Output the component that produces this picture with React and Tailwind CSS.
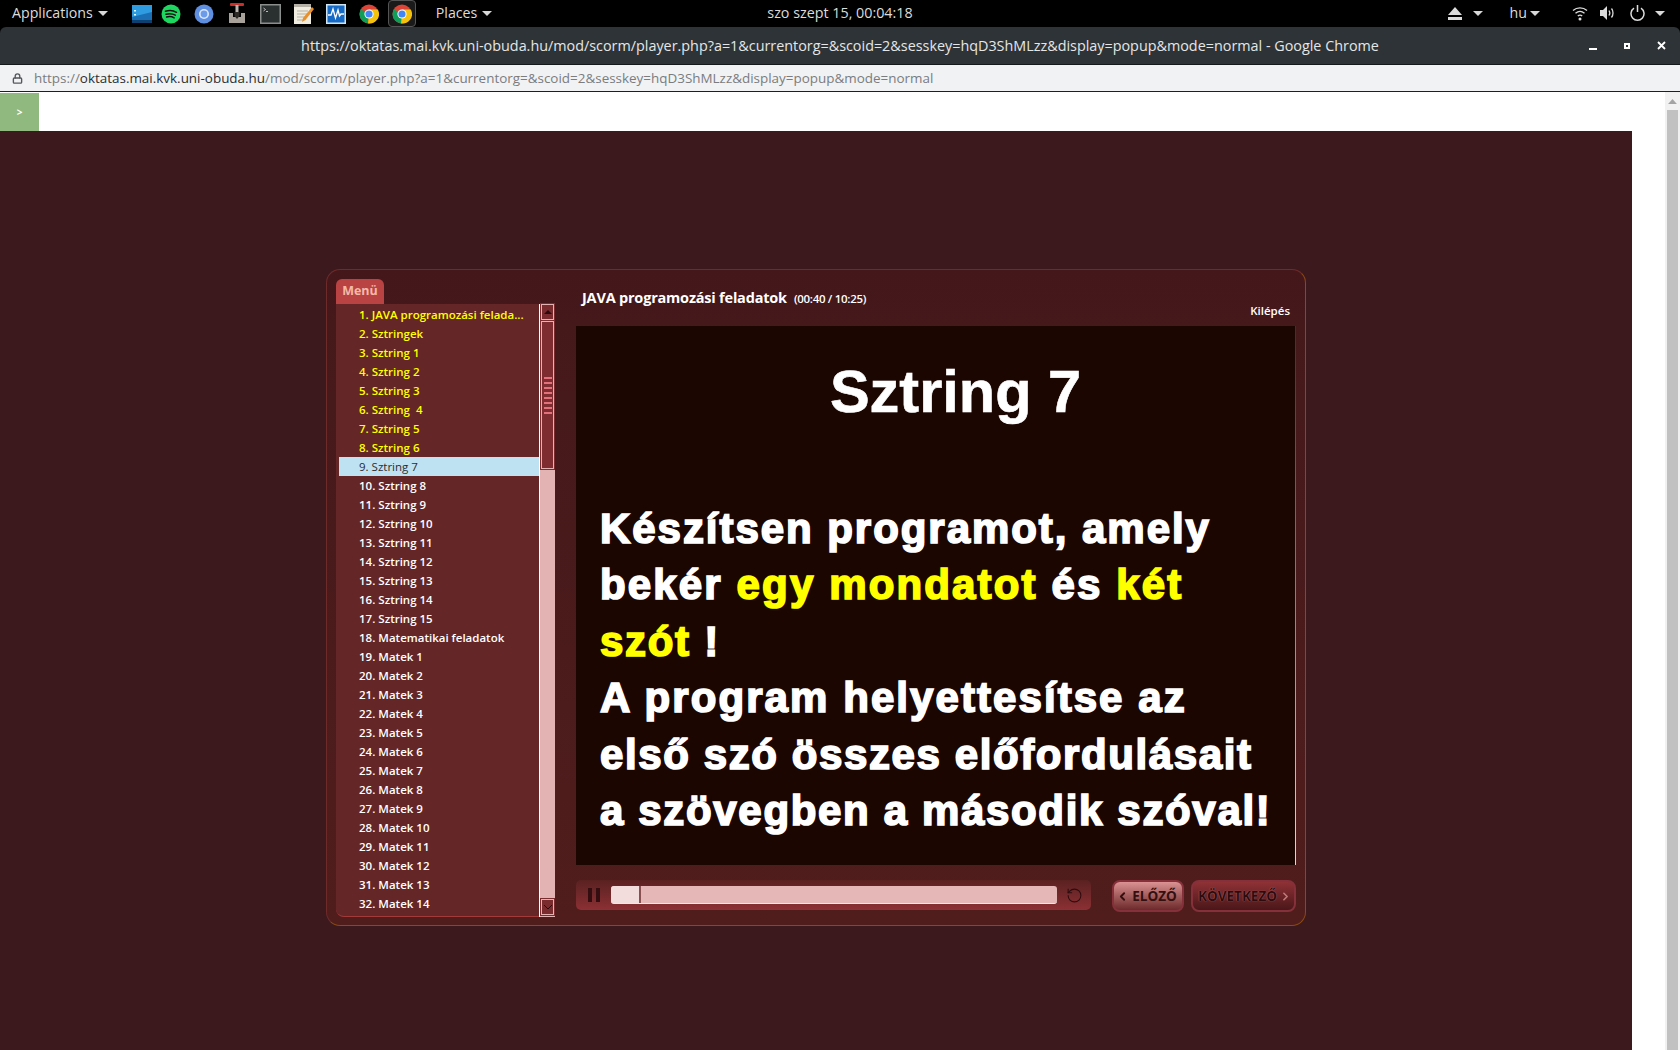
import { Lock, RotateCcw, ChevronLeft, ChevronRight } from "lucide-react";

const menuItems = [
  "JAVA programozási felada...", "Sztringek", "Sztring 1", "Sztring 2", "Sztring 3", "Sztring  4",
  "Sztring 5", "Sztring 6", "Sztring 7", "Sztring 8", "Sztring 9", "Sztring 10", "Sztring 11",
  "Sztring 12", "Sztring 13", "Sztring 14", "Sztring 15", "Matematikai feladatok", "Matek 1",
  "Matek 2", "Matek 3", "Matek 4", "Matek 5", "Matek 6", "Matek 7", "Matek 8", "Matek 9",
  "Matek 10", "Matek 11", "Matek 12", "Matek 13", "Matek 14",
];

const url = "https://oktatas.mai.kvk.uni-obuda.hu/mod/scorm/player.php?a=1&currentorg=&scoid=2&sesskey=hqD3ShMLzz&display=popup&mode=normal";

function Caret({ className = "" }) {
  return (
    <svg width="10" height="5" viewBox="0 0 10 5" className={className}>
      <path d="M0 0h10L5 5z" fill="#d8d8d8" />
    </svg>
  );
}

function ChromeIcon() {
  return (
    <svg width="20" height="20" viewBox="0 0 20 20">
      <circle cx="10" cy="10" r="9.5" fill="#db4437" />
      <path d="M10 10 1.8 5.2A9.5 9.5 0 0 0 9 19.45z" fill="#0f9d58" />
      <path d="M10 5.5h8.8A9.5 9.5 0 0 1 9 19.45L10 10z" fill="#f4c20d" />
      <circle cx="10" cy="10" r="4.6" fill="#fff" />
      <circle cx="10" cy="10" r="3.6" fill="#4285f4" />
    </svg>
  );
}

function DockIcons() {
  return (
    <div className="ml-[24px] flex items-center">
      <svg width="20" height="18" viewBox="0 0 20 18">
        <rect width="20" height="18" rx="1" fill="#1b6fb5" />
        <path d="M0 0h20v7L0 12z" fill="#2f9be0" />
        <rect y="15" width="20" height="3" fill="#0d3f70" />
        <path d="M2 5h2v1.500H2zm0 4h2v1.500H2z" fill="#dff" />
      </svg>
      <svg width="20" height="20" viewBox="0 0 20 20" className="ml-[9px]">
        <circle cx="10" cy="10" r="9.500" fill="#1ed760" />
        <path d="M4.500 7.300c3.800-1.100 7.800-.8 11 1M5 10.200c3.200-.9 6.500-.6 9.300.9M5.600 13c2.600-.7 5.300-.5 7.600.8" stroke="#111" strokeWidth="1.500" fill="none" strokeLinecap="round" />
      </svg>
      <svg width="20" height="20" viewBox="0 0 20 20" className="ml-[13px]">
        <circle cx="10" cy="10" r="9.500" fill="#5f8fe0" />
        <circle cx="10" cy="10" r="5" fill="#dbe7fb" />
        <circle cx="10" cy="10" r="3.400" fill="#6c9bea" />
      </svg>
      <svg width="18" height="21" viewBox="0 0 18 21" className="ml-[14px]">
        <rect x="2" y="0" width="14" height="3" rx="1" fill="#c9302c" />
        <rect x="7.500" y="2" width="3" height="9" fill="#b9b4ad" />
        <path d="M1 10h4v4h8v-4h4v10H1z" fill="#a8a29a" />
        <path d="M6.500 9h5v4L9 16l-2.500-3z" fill="#2e2a26" />
      </svg>
      <svg width="21" height="20" viewBox="0 0 21 20" className="ml-[14px]">
        <rect width="21" height="20" fill="#8a8f8d" />
        <rect x="1.500" y="1.500" width="18" height="17" fill="#2a2f30" />
        <path d="M3.500 4l2 1.500-2 1.500" stroke="#ddd" strokeWidth=".8" fill="none" />
        <rect x="6" y="7" width="2" height=".8" fill="#ddd" />
      </svg>
      <svg width="21" height="21" viewBox="0 0 21 21" className="ml-[12px]">
        <rect x="1" y="1" width="17" height="20" fill="#f0ece0" />
        <rect x="1" y="1" width="17" height="3" fill="#b5b1a6" />
        <path d="M4 8h11M4 11h11M4 14h8M4 17h7" stroke="#b5b1a6" />
        <path d="M19 4 10 15l-1 4 3.500-2L21 6z" fill="#e8912c" />
      </svg>
      <svg width="20" height="20" viewBox="0 0 20 20" className="ml-[12px]">
        <rect width="20" height="20" fill="#cfe6f7" />
        <rect x="1.500" y="1.500" width="17" height="17" fill="#1669c4" />
        <path d="M2 11h3l2-6 2.500 9L12 6l1.500 6 1.500-2h3" stroke="#fff" strokeWidth="1.300" fill="none" />
      </svg>
      <div className="ml-[13px]">
        <ChromeIcon />
      </div>
      <div className="ml-[9px] flex h-[27px] w-[28px] items-center justify-center rounded-[4px] border border-[#555] bg-[#1a1a1a]">
        <ChromeIcon />
      </div>
    </div>
  );
}

function TopBar() {
  return (
    <div className="grid h-[27px] grid-cols-[1fr_auto_1fr] items-center bg-black text-[14.200px] text-[#dcdcdc]">
      <div className="flex items-center pl-[12px]">
        <span className="pb-[2px]">Applications</span>
        <Caret className="ml-[5px]" />
        <DockIcons />
        <span className="ml-[20px] pb-[2px]">Places</span>
        <Caret className="ml-[5px]" />
      </div>
      <div className="pb-[2px] text-[14.300px]">szo szept 15, 00:04:18</div>
      <div className="flex items-center justify-end pr-[15px]">
        <svg width="14" height="13" viewBox="0 0 14 13">
          <path d="M7 0l7 8H0zM0 10h14v3H0z" fill="#dcdcdc" />
        </svg>
        <Caret className="ml-[11px]" />
        <span className="ml-[27px] pb-[2px]">hu</span>
        <Caret className="ml-[3px]" />
        <svg width="16" height="15" viewBox="0 0 16 15" fill="none" stroke="#dcdcdc" strokeWidth="1.400" className="ml-[32px]">
          <path d="M1 4.500c4-3.500 10-3.500 14 0M3.500 7.300c2.700-2.300 6.300-2.300 9 0M5.800 10c1.300-1 3.100-1 4.400 0" />
          <circle cx="8" cy="13" r="1.500" fill="#dcdcdc" stroke="none" />
        </svg>
        <svg width="15" height="14" viewBox="0 0 15 14" className="ml-[12px]">
          <path d="M0 4h3l4-4v14l-4-4H0z" fill="#dcdcdc" />
          <path d="M9 4.500c1 1.500 1 3.500 0 5M11.500 2.500c2 2.500 2 6.500 0 9" stroke="#dcdcdc" strokeWidth="1.300" fill="none" />
        </svg>
        <svg width="15" height="16" viewBox="0 0 15 16" fill="none" stroke="#dcdcdc" strokeWidth="1.500" className="ml-[15px]">
          <path d="M7.500 0v7M4 3.200a6.500 6.500 0 1 0 7 0" />
        </svg>
        <Caret className="ml-[10px]" />
      </div>
    </div>
  );
}

function TitleBar() {
  return (
    <div className="grid h-[38px] grid-cols-[1fr_auto_1fr] items-center rounded-t-[6px] border-b border-[#15191a] bg-[#2d3336] text-[14.370px] text-[#e6e6e6]">
      <div />
      <div>{url} - Google Chrome</div>
      <div className="flex items-center justify-end pr-[14px]">
        <div className="h-[2px] w-[8px] translate-y-[3px] bg-white" />
        <div className="ml-[27px] flex h-[6px] w-[6px] items-center justify-center border-[2px] border-white" />
        <svg width="9" height="9" viewBox="0 0 9 9" className="ml-[27px]">
          <path d="M1 1l7 7M8 1L1 8" stroke="#fff" strokeWidth="1.800" />
        </svg>
      </div>
    </div>
  );
}

function AddressBar() {
  return (
    <div className="flex h-[27px] items-center border-b border-[#1d1f20] bg-[#f1f2f4] pl-[12px] text-[13.450px] text-[#7a7c80]">
      <Lock size={11} strokeWidth={3} className="text-[#55585c]" />
      <span className="ml-[11px]">https://</span>
      <span className="text-[#2c2e30]">oktatas.mai.kvk.uni-obuda.hu</span>
      <span>/mod/scorm/player.php?a=1&amp;currentorg=&amp;scoid=2&amp;sesskey=hqD3ShMLzz&amp;display=popup&amp;mode=normal</span>
    </div>
  );
}

function MenuList() {
  return (
    <div className="flex h-[613px] w-[219px]">
      <div className="w-[204px] rounded-bl-[8px] border-b border-[#a33a3a] bg-[#642626] pl-[3px] pt-[1px]">
        {menuItems.map((item, i) => {
          const active = i === 8;
          const seen = i < 8;
          return (
            <div
              key={i}
              className={`flex h-[19px] w-[200px] items-center whitespace-pre pl-[20px] text-[11.500px] ${
                active
                  ? "bg-[#bfe2f3] font-normal text-[#2d2d2d]"
                  : seen
                    ? "font-semibold text-[#ffff00]"
                    : "font-semibold text-white"
              }`}
            >
              <span className="mr-[3px]">{i + 1}.</span> {item}
            </div>
          );
        })}
      </div>
      <div className="flex w-[16px] flex-col border-l border-white bg-[#e3b3b3] px-[1px] pb-[2px]">
        <div className="flex h-[16px] items-center justify-center border-[1.500px] border-[#e3b3b3] bg-[#7a2b2e] outline-1 outline-[#7a2b2e]">
          <svg width="8" height="4" viewBox="0 0 8 4"><path d="M0 4l4-4 4 4z" fill="#2c0a0c" /></svg>
        </div>
        <div className="mt-[1px] flex h-[148px] flex-col items-center justify-center gap-[3px] border-[1.500px] border-[#e3b3b3] bg-[#7f2c30] outline-1 outline-[#7a2b2e]">
          {[0, 1, 2, 3, 4, 5, 6, 7].map((n) => (
            <div key={n} className="h-[2px] w-[8px] bg-[#e3707a]" />
          ))}
        </div>
        <div className="flex-1" />
        <div className="flex h-[16px] items-center justify-center border-[1.500px] border-[#e3b3b3] bg-[#7a2b2e] outline-1 outline-[#7a2b2e]">
          <svg width="8" height="5" viewBox="0 0 8 5"><path d="M0 0l4 4 4-4" fill="none" stroke="#2c0a0c" /></svg>
        </div>
      </div>
    </div>
  );
}

function Slide() {
  const line = "h-[56.400px]";
  return (
    <div className="flex h-[539px] w-[720px] bg-[#1c0602] font-['Liberation_Sans',sans-serif] font-bold text-white">
      <div className="flex-1 pl-[24px]">
        <div className="ml-[-24px] pl-[40px] pt-[31px] text-center text-[59.500px] leading-[70px] [-webkit-text-stroke:0.600px_currentColor]">
          Sztring 7
        </div>
        <div className="mt-[74px] text-[42px] leading-[56.400px] tracking-[1.700px] [-webkit-text-stroke:1.700px_currentColor]">
          <div className={`${line} tracking-[1.950px]`}>Készítsen programot, amely</div>
          <div className={`${line} tracking-[2.140px]`}>
            bekér <span className="text-[#ffff00]">egy mondatot</span> és <span className="text-[#ffff00]">két</span>
          </div>
          <div className={line}>
            <span className="text-[#ffff00]">szót</span> !
          </div>
          <div className={`${line} tracking-[2.070px]`}>A program helyettesítse az</div>
          <div className={`${line} tracking-[1.600px]`}>első szó összes előfordulásait</div>
          <div className={`${line} tracking-[1.660px]`}>a szövegben a második szóval!</div>
        </div>
      </div>
      <div className="w-px bg-linear-to-b from-[#4a2a25] to-[#dcd8d6]" />
    </div>
  );
}

function Controls() {
  return (
    <div className="mt-[15px] flex h-[31px] items-start">
      <div className="flex h-[30px] w-[515px] items-center rounded-[5px] bg-linear-to-b from-[#5a2121] to-[#8c3034] pl-[12px]">
        <div className="flex gap-[4px]">
          <div className="h-[14px] w-[4px] bg-[#330d0f]" />
          <div className="h-[14px] w-[4px] bg-[#330d0f]" />
        </div>
        <div className="ml-[11px] flex h-[18px] w-[446px] overflow-hidden rounded-[3px] border-b border-[#f5e5e5] bg-[#e5b7b7]">
          <div className="h-full w-[30px] border-r-2 border-[#8a5050] bg-[#f3dcdc]" />
        </div>
        <RotateCcw size={17} strokeWidth={1.500} className="ml-[9px] text-[#2e0c0e]" />
      </div>
      <button className="ml-[21px] flex h-[32px] w-[72px] items-center justify-center rounded-[8px] border-2 border-[#85303a] bg-linear-to-b from-[#dc9292] to-[#6d2a2c] pr-[3px] text-[13.500px] font-bold text-[#33100f]">
        <ChevronLeft size={13} strokeWidth={3.500} />
        <span className="ml-[3px]">ELŐZŐ</span>
      </button>
      <button className="ml-[7px] flex h-[32px] w-[105px] items-center justify-center rounded-[8px] border-2 border-[#85303a] bg-linear-to-b from-[#8f3236] to-[#4a1719] pl-[3px] text-[13.500px] font-bold text-[#2c0c0e]">
        <span className="[text-shadow:0_0_1px_#c98080]">KÖVETKEZŐ</span>
        <ChevronRight size={13} strokeWidth={3} className="ml-[2px] text-[#c07a7a]" />
      </button>
    </div>
  );
}

function Player() {
  return (
    <div className="ml-[326px] mt-[137px] flex h-[657px] w-[980px] rounded-[14px] border border-[#6f2a2a] border-b-[#8a4a14] border-r-[#8a4a14] bg-linear-to-b from-[#44181a] to-[#501d1c] pl-[9px] pt-[9px]">
      <div className="flex flex-col">
        <div className="flex h-[25px] w-[48px] items-center justify-center rounded-t-[6px] bg-[#b94343] text-[12.500px] font-bold text-[#f3b9a8]">
          Menü
        </div>
        <MenuList />
      </div>
      <div className="ml-[21px] flex flex-col">
        <div className="relative h-[47px] w-[720px]">
          <div className="flex items-baseline pl-[6px] pt-[8px] text-white">
            <span className="text-[14.500px] font-bold tracking-[-0.200px]">JAVA programozási feladatok</span>
            <span className="ml-[7px] text-[11.500px] font-semibold tracking-[-0.300px]">(00:40 / 10:25)</span>
          </div>
          <div className="absolute right-[6px] top-[23px] text-[11.500px] font-semibold text-white">Kilépés</div>
        </div>
        <Slide />
        <Controls />
      </div>
    </div>
  );
}

export default function App() {
  return (
    <div className="flex h-screen w-full flex-col overflow-hidden bg-black font-['Open_Sans',sans-serif]">
      <TopBar />
      <TitleBar />
      <AddressBar />
      <div className="flex flex-1 bg-white">
        <div className="flex flex-1 flex-col pt-[1px]">
          <div className="h-[38px]">
            <div className="flex h-full w-[39px] items-center justify-center bg-[#8fb97e] text-[10px] font-bold text-white">
              &gt;
            </div>
          </div>
          <div className="w-[1632px] flex-1 bg-[#3b191d] pt-px">
            <Player />
          </div>
        </div>
        <div className="flex w-[15px] flex-col items-center bg-[#f1f1f1]">
          <svg width="9" height="5" viewBox="0 0 9 5" className="mt-[7px]">
            <path d="M0 5l4.500-5L9 5z" fill="#a3a3a3" />
          </svg>
          <div className="mt-[6px] h-full w-[11px] bg-[#c1c1c1]" />
        </div>
      </div>
    </div>
  );
}
